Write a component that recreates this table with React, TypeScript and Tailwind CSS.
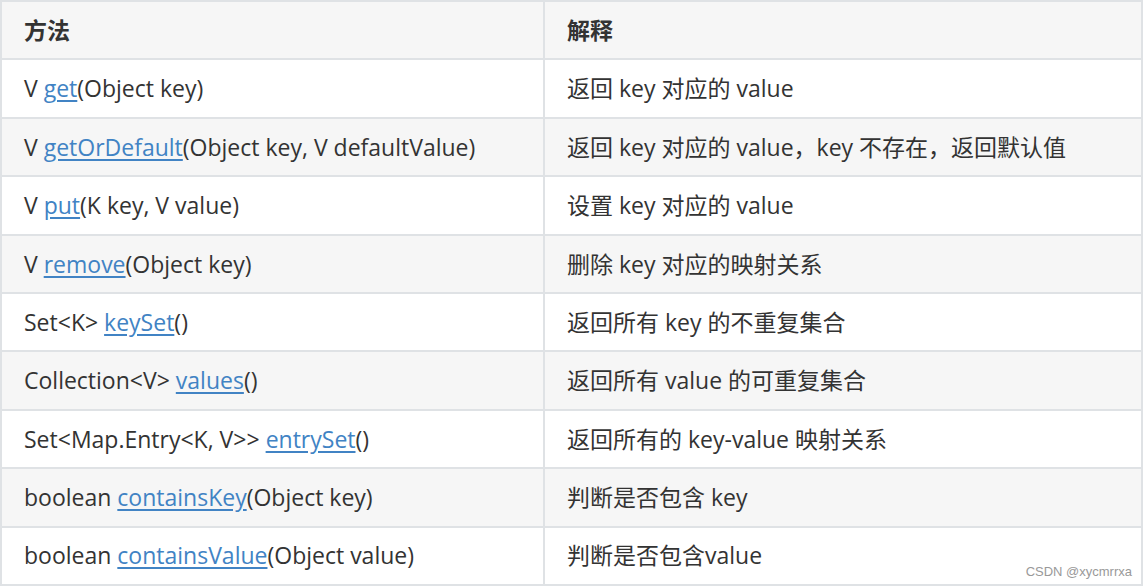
import React from "react";

type Row = { ret: string; name: string; args: string; desc: string };

const ROWS: Row[] = [
  { ret: "V ", name: "get", args: "(Object key)", desc: "返回 key 对应的 value" },
  { ret: "V ", name: "getOrDefault", args: "(Object key, V defaultValue)", desc: "返回 key 对应的 value，key 不存在，返回默认值" },
  { ret: "V ", name: "put", args: "(K key, V value)", desc: "设置 key 对应的 value" },
  { ret: "V ", name: "remove", args: "(Object key)", desc: "删除 key 对应的映射关系" },
  { ret: "Set<K> ", name: "keySet", args: "()", desc: "返回所有 key 的不重复集合" },
  { ret: "Collection<V> ", name: "values", args: "()", desc: "返回所有 value 的可重复集合" },
  { ret: "Set<Map.Entry<K, V>> ", name: "entrySet", args: "()", desc: "返回所有的 key-value 映射关系" },
  { ret: "boolean ", name: "containsKey", args: "(Object key)", desc: "判断是否包含 key" },
  { ret: "boolean ", name: "containsValue", args: "(Object value)", desc: "判断是否包含value" },
];

export default function App() {
  return (
    <div
      className="relative w-[1145px] h-[587px] bg-white overflow-hidden text-[#333] text-[23px]"
      style={{ fontFamily: '"Open Sans", "Noto Sans CJK SC", sans-serif' }}
    >
      <table className="w-[1143px] border-collapse border-2 border-[#dfe2e5]">
        <thead>
          <tr className="bg-[#f6f6f6]">
            <th className="w-[543px] h-[58.4px] border-2 border-[#dfe2e5] pl-[22px] text-left font-bold">方法</th>
            <th className="h-[58.4px] border-2 border-[#dfe2e5] pl-[22px] text-left font-bold">解释</th>
          </tr>
        </thead>
        <tbody>
          {ROWS.map((r, i) => (
            <tr key={r.name} className={i % 2 === 1 ? "bg-[#f6f6f6]" : "bg-white"}>
              <td className="h-[58.4px] border-2 border-[#dfe2e5] pl-[22px] whitespace-nowrap">
                {r.ret}
                <a href="#" className="text-[#4183c4] underline underline-offset-[3px]">{r.name}</a>
                {r.args}
              </td>
              <td className="h-[58.4px] border-2 border-[#dfe2e5] pl-[22px] whitespace-nowrap">{r.desc}</td>
            </tr>
          ))}
        </tbody>
      </table>
      <span
        className="absolute right-[13px] top-[562px] text-[13px] text-[#999]"
        style={{ fontFamily: '"Liberation Sans", Arial, sans-serif' }}
      >
        CSDN @xycmrrxa
      </span>
    </div>
  );
}
